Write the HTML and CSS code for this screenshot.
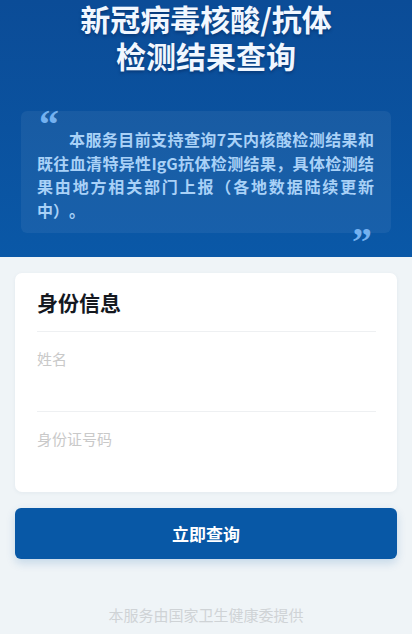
FILE: index.html
```html
<!DOCTYPE html>
<html lang="zh-CN">
<head>
    <meta charset="UTF-8">
    <meta name="viewport" content="width=device-width, initial-scale=1.0">
    <title>新冠病毒核酸/抗体检测结果查询</title>
    <link rel="stylesheet" href="styles.css">
</head>
<body>
    <div class="banner">
        <h1 class="banner-title">新冠病毒核酸/抗体<br>检测结果查询</h1>
        <div class="notice">
            <span class="quote quote-open">&ldquo;</span>
            <p class="notice-text">本服务目前支持查询7天内核酸检测结果和既往血清特异性IgG抗体检测结果，具体检测结果由地方相关部门上报（各地数据陆续更新中）。</p>
            <span class="quote quote-close">&rdquo;</span>
        </div>
    </div>

    <div class="main">
        <div class="card">
            <div class="card-header">身份信息</div>
            <div class="field">
                <input class="field-input" type="text" placeholder="姓名">
            </div>
            <div class="field">
                <input class="field-input" type="text" placeholder="身份证号码">
            </div>
        </div>

        <button class="submit-btn" type="button">立即查询</button>

        <div class="footer">本服务由国家卫生健康委提供</div>
    </div>
</body>
</html>
```

FILE: styles.css
```css
body {
    margin: 0;
    background-color: #eff4f7;
    font-family: "Noto Sans CJK SC", "Noto Sans", sans-serif;
    text-spacing-trim: space-all;
}

.banner {
    background: linear-gradient(180deg, #0b4c97 0%, #0a58a7 100%);
    padding: 0 21px 24px;
}

.banner-title {
    margin: 0;
    font-size: 30px;
    line-height: 37px;
    font-weight: 700;
    text-align: center;
    color: #f1f7ff;
    text-shadow: 0 2px 3px rgba(0, 20, 60, 0.35);
}

.notice {
    position: relative;
    margin-top: 37px;
    padding: 17px 17px 11px 16px;
    background-color: rgba(255, 255, 255, 0.06);
    border-radius: 6px;
}

.notice-text {
    margin: 0;
    font-size: 16px;
    line-height: 23.5px;
    font-weight: 700;
    color: #a9d1f7;
    text-indent: 2em;
    text-align: justify;
}

.quote {
    position: absolute;
    font-family: "Liberation Serif", serif;
    font-weight: 700;
    font-size: 40px;
    line-height: 1;
    color: #74b1f0;
}

.quote-open {
    left: 18px;
    top: -6px;
}

.quote-close {
    right: 19px;
    bottom: -29px;
}

.main {
    padding: 16px 15px 0;
}

.card {
    background-color: #fff;
    border-radius: 7px;
    padding: 0 21px 0 22px;
    box-shadow: 0 1px 4px rgba(30, 60, 100, 0.06);
}

.card-header {
    height: 58px;
    line-height: 58px;
    font-size: 21px;
    font-weight: 700;
    color: #14181f;
    border-bottom: 1px solid #eef0f2;
}

.field {
    height: 80px;
    padding-top: 15px;
    box-sizing: border-box;
    border-bottom: 1px solid #eef0f2;
}

.field:last-child {
    border-bottom: none;
}

.field-input {
    display: block;
    width: 100%;
    height: 22px;
    padding: 0;
    border: none;
    outline: none;
    font-family: inherit;
    font-size: 15px;
    color: #333;
    background: transparent;
}

.field-input::placeholder {
    color: #c9c9c9;
}

.submit-btn {
    display: block;
    width: 100%;
    height: 51px;
    margin-top: 16px;
    border: none;
    border-radius: 6px;
    background-color: #0858a6;
    color: #fff;
    font-family: inherit;
    font-size: 17px;
    font-weight: 700;
    cursor: pointer;
    box-shadow: 0 4px 10px rgba(8, 88, 166, 0.18);
}

.footer {
    margin-top: 45px;
    text-align: center;
    font-size: 15px;
    color: #cfd3d6;
}
```
